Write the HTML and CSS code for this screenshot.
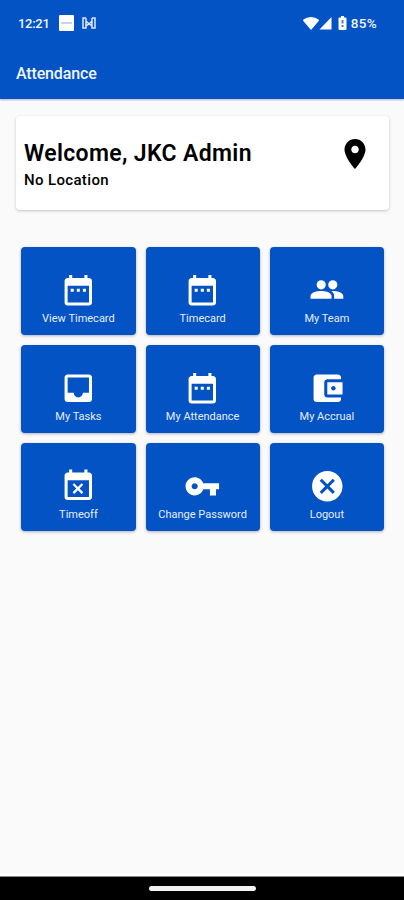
FILE: index.html
```html
<!DOCTYPE html>
<html lang="en">
<head>
    <meta charset="UTF-8">
    <meta name="viewport" content="width=device-width, initial-scale=1.0">
    <title>Attendance</title>
    <link rel="stylesheet" href="styles.css">
</head>
<body>
    <svg class="sprite">
        <symbol id="calendar" viewBox="0 0 24 24">
            <path d="M9 11H7v2h2v-2zm4 0h-2v2h2v-2zm4 0h-2v2h2v-2zm2-7h-1V2h-2v2H8V2H6v2H5c-1.11 0-1.99.9-1.99 2L3 20c0 1.1.89 2 2 2h14c1.1 0 2-.9 2-2V6c0-1.1-.9-2-2-2zm0 16H5V9h14v11z"/>
        </symbol>
    </svg>

    <header>
        <div class="status-bar">
            <span class="time">12:21</span>
            <svg class="app-icon" width="15" height="16" viewBox="0 0 15 16">
                <rect width="15" height="16" rx="1" fill="#fff"/>
                <path d="M2 8h11" stroke="#8da9dc" stroke-width="1"/>
            </svg>
            <svg class="bracket-icon" width="14" height="12" viewBox="0 0 14 12" fill="none" stroke="#dfe8f8" stroke-width="1.5">
                <path d="M4 1H1v10h3V4l3 3 3-3v7h3V1h-3M4 9l3-2 3 2M4 1v3M10 1v3"/>
            </svg>
            <svg class="wifi" width="16" height="13" viewBox="0 0 16 13" fill="#fff">
                <path d="M8 13L.3 4Q-.2 3.2.5 2.6Q3.5 0 8 0T15.5 2.6Q16.2 3.2 15.7 4z"/>
            </svg>
            <svg class="signal" width="13" height="13" viewBox="0 0 13 13" fill="#fff">
                <path d="M12.5 0v12.5H.5z"/>
            </svg>
            <svg class="battery" width="9" height="14" viewBox="0 0 9 14">
                <path d="M3 0h3v1.500h1.500q1 0 1 1V13q0 1-1 1h-6q-1 0-1-1V2.500q0-1 1-1H3z" fill="#fff"/>
                <path d="M4.500 4v3.500M4.500 9v2" stroke="#4a7dd0" stroke-width="2"/>
            </svg>
            <span class="percent">85%</span>
        </div>
        <h1>Attendance</h1>
    </header>

    <main>
        <div class="welcome">
            <div>
                <h2>Welcome, JKC Admin</h2>
                <p>No Location</p>
            </div>
            <svg class="pin" viewBox="0 0 24 24">
                <path d="M12 2C8.130 2 5 5.130 5 9c0 5.250 7 13 7 13s7-7.750 7-13c0-3.870-3.130-7-7-7zm0 9.500c-1.380 0-2.500-1.120-2.500-2.500s1.120-2.500 2.500-2.500 2.500 1.120 2.500 2.500-1.120 2.500-2.500 2.500z"/>
            </svg>
        </div>

        <div class="menu">
            <button>
                <svg viewBox="0 0 24 24"><use href="#calendar"/></svg>
                <span>View Timecard</span>
            </button>
            <button>
                <svg viewBox="0 0 24 24"><use href="#calendar"/></svg>
                <span>Timecard</span>
            </button>
            <button>
                <svg viewBox="0 0 24 24">
                    <circle cx="8" cy="8.400" r="3"/>
                    <circle cx="15.600" cy="8.400" r="3"/>
                    <path d="M8 12.400c-2.330 0-7 .9-7 3.200v2h13.800v-2c0-2.300-4.470-3.200-6.800-3.200zM15.600 12.400c-.3 0-.6 0-1 .05 1.200.85 1.900 1.900 1.900 3.150v2h6v-2c0-2.300-4.570-3.200-6.900-3.200z"/>
                </svg>
                <span>My Team</span>
            </button>
            <button>
                <svg viewBox="0 0 24 24">
                    <path d="M19 3H5c-1.100 0-2 .9-2 2v14c0 1.100.9 2 2 2h14c1.100 0 2-.9 2-2V5c0-1.100-.9-2-2-2zm0 12h-4c0 1.660-1.350 3-3 3s-3-1.340-3-3H5V5h14v10z"/>
                </svg>
                <span>My Tasks</span>
            </button>
            <button>
                <svg viewBox="0 0 24 24"><use href="#calendar"/></svg>
                <span>My Attendance</span>
            </button>
            <button>
                <svg viewBox="0 0 24 24">
                    <path d="M21 18v1c0 1.100-.9 2-2 2H5c-1.110 0-2-.9-2-2V5c0-1.100.89-2 2-2h14c1.100 0 2 .9 2 2v1h-9c-1.110 0-2 .9-2 2v8c0 1.100.89 2 2 2h9zm-9-2h10V8H12v8zm4-2.500c-.83 0-1.500-.67-1.500-1.500s.67-1.500 1.500-1.500 1.500.67 1.500 1.500-.67 1.500-1.500 1.500z"/>
                </svg>
                <span>My Accrual</span>
            </button>
            <button>
                <svg viewBox="0 0 24 24">
                    <path d="M9.310 17l2.440-2.440L14.190 17l1.060-1.060-2.440-2.440 2.440-2.440L14.190 10l-2.440 2.440L9.310 10l-1.060 1.060 2.440 2.440-2.440 2.440L9.310 17zM19 3h-1V1h-2v2H8V1H6v2H5c-1.110 0-1.990.9-1.990 2L3 19c0 1.100.89 2 2 2h14c1.100 0 2-.9 2-2V5c0-1.100-.9-2-2-2zm0 16H5V8h14v11z"/>
                </svg>
                <span>Timeoff</span>
            </button>
            <button>
                <svg viewBox="0 0 24 24">
                    <path d="M12.650 10C11.830 7.670 9.610 6 7 6c-3.310 0-6 2.690-6 6s2.690 6 6 6c2.610 0 4.830-1.670 5.650-4H17v4h4v-4h2v-4H12.650zM7 14c-1.100 0-2-.9-2-2s.9-2 2-2 2 .9 2 2-.9 2-2 2z"/>
                </svg>
                <span>Change Password</span>
            </button>
            <button>
                <svg viewBox="0 0 24 24">
                    <path d="M12 2C6.470 2 2 6.470 2 12s4.470 10 10 10 10-4.470 10-10S17.530 2 12 2zm5 13.590L15.590 17 12 13.410 8.410 17 7 15.590 10.590 12 7 8.410 8.410 7 12 10.590 15.590 7 17 8.410 13.410 12 17 15.590z"/>
                </svg>
                <span>Logout</span>
            </button>
        </div>
    </main>

    <footer>
        <div class="handle"></div>
    </footer>
</body>
</html>
```

FILE: styles.css
```css
* {
    box-sizing: border-box;
}
body {
    display: flex;
    flex-direction: column;
    height: 900px;
    margin: 0;
    font-family: Roboto, sans-serif;
    background-color: #fafafa;
}
h1, h2, p {
    margin: 0;
}
.sprite {
    display: none;
}
header {
    height: 99px;
    background-color: #0353c5;
    color: #f0f5ff;
    box-shadow: 0 1px 2px rgba(0,0,80,0.3);
}
.status-bar {
    display: flex;
    align-items: center;
    height: 46px;
    padding: 0 27px 0 18px;
    font-size: 13px;
    font-weight: 500;
}
.time {
    width: 41px;
    letter-spacing: -0.3px;
}
.percent {
    font-size: 13.5px;
    letter-spacing: 0.3px;
}
.bracket-icon {
    margin-left: 8px;
}
.wifi {
    margin-left: auto;
}
.battery {
    margin: 0 4px 0 6px;
}
h1 {
    padding-left: 16px;
    font-size: 16px;
    font-weight: 500;
    line-height: 55px;
    letter-spacing: -0.15px;
}
main {
    flex: 1;
    padding: 17px 15px 0 16px;
}
.welcome {
    display: flex;
    justify-content: space-between;
    height: 94px;
    padding: 20px 16px 0 8px;
    background-color: white;
    border-radius: 4px;
    box-shadow: 0 1px 3px rgba(0,0,0,0.22);
}
h2 {
    font-size: 23px;
    font-weight: 600;
    line-height: 36px;
    letter-spacing: 0.35px;
}
p {
    font-size: 15px;
    font-weight: 500;
    line-height: 17px;
    letter-spacing: 0.35px;
}
.pin {
    width: 36px;
    height: 36px;
}
.menu {
    display: grid;
    grid-template-columns: repeat(3, 1fr);
    grid-auto-rows: 88px;
    gap: 10.2px 10px;
    margin: 37px 5px 0 5.3px;
}
button {
    display: flex;
    flex-direction: column;
    align-items: center;
    padding: 25px 0 0;
    border: none;
    border-radius: 4px;
    background-color: #0353c5;
    color: #e6eefc;
    font-family: inherit;
    font-size: 11px;
    white-space: nowrap;
    box-shadow: 0 1px 3px rgba(0,0,60,0.3);
}
button svg {
    width: 36.6px;
    height: 36.6px;
    fill: white;
}
button span {
    margin-top: 3px;
    line-height: 14px;
}
footer {
    display: flex;
    justify-content: center;
    align-items: center;
    height: 24px;
    background-color: black;
    border-top: 1px solid #8a8a8a;
    box-shadow: 0 -3px 0 white;
}
.handle {
    width: 107px;
    height: 5px;
    border-radius: 3px;
    background-color: #f2f2f2;
}
```
